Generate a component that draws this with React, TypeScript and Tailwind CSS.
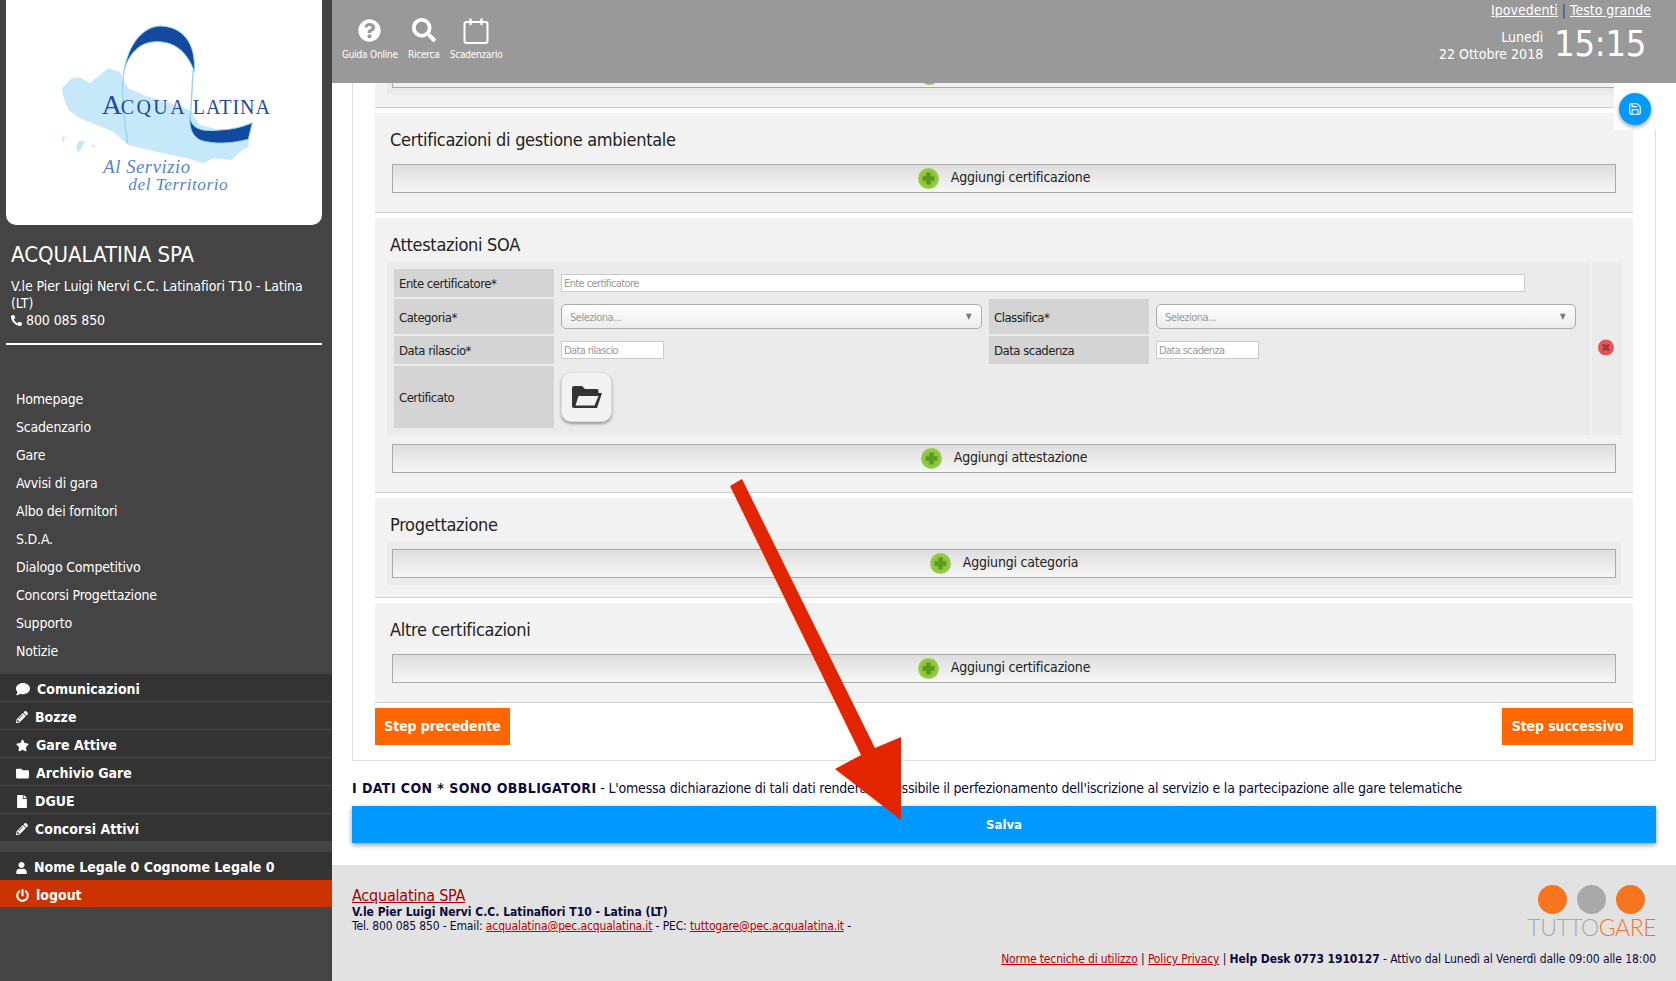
import React from 'react';
import { FaComment, FaPencilAlt, FaStar, FaFolder, FaFile, FaUser, FaPowerOff, FaPhoneAlt, FaQuestionCircle, FaSearch } from 'react-icons/fa';
import { Save } from 'lucide-react';

const NAV = ['Homepage', 'Scadenzario', 'Gare', 'Avvisi di gara', 'Albo dei fornitori', 'S.D.A.', 'Dialogo Competitivo', 'Concorsi Progettazione', 'Supporto', 'Notizie'];

const DARK_NAV = [
  { icon: <FaComment className="w-[14px] h-[14px]" />, label: 'Comunicazioni' },
  { icon: <FaPencilAlt className="w-[12px] h-[12px]" />, label: 'Bozze' },
  { icon: <FaStar className="w-[13px] h-[13px]" />, label: 'Gare Attive' },
  { icon: <FaFolder className="w-[13px] h-[13px]" />, label: 'Archivio Gare' },
  { icon: <FaFile className="w-[12px] h-[13px]" />, label: 'DGUE' },
  { icon: <FaPencilAlt className="w-[12px] h-[12px]" />, label: 'Concorsi Attivi' },
];

const Logo = () => (
  <svg viewBox="18 0 948 675" className="w-full h-full">
    <path d="M185 265 L215 235 L240 232 L270 250 L300 225 L325 205 L360 215 L368 235 L385 265 L430 285 L480 300 L570 330 L600 375 L680 395 L750 370 L745 440 L720 455 L695 480 L640 475 L610 490 L560 475 L470 455 L385 435 L340 395 L290 375 L240 355 L205 330 L190 290 Z" fill="#c6e8f9" />
    <path d="M185 408 L195 412 L190 430 Z M228 440 L240 420 L255 425 L235 460 Z M275 435 L287 438 L278 444 Z" fill="#c6e8f9" />
    <path d="M372 215 C360 280 375 370 383 430" fill="none" stroke="#8fd6f5" strokeWidth="4" />
    <path d="M580 210 C575 260 575 320 570 360" fill="none" stroke="#8fd6f5" strokeWidth="4" />
    <path d="M372 215 C385 130 430 80 480 78 C550 80 588 130 583 215 C560 150 520 125 470 125 C420 125 385 160 372 215Z" fill="#134a9e" stroke="#8fd6f5" strokeWidth="3" />
    <path d="M570 350 C575 390 610 395 660 390 C700 388 730 380 757 368 L745 418 C700 430 640 435 600 420 C575 405 568 385 570 350Z" fill="#134a9e" stroke="#8fd6f5" strokeWidth="3" />
    <text x="305" y="342" fontFamily="'Liberation Serif', serif" fontSize="84" fill="#1e4b9e">A</text>
    <text x="362" y="342" fontFamily="'Liberation Serif', serif" fontSize="60" fill="#1e4b9e" textLength="192">CQUA</text>
    <text x="578" y="342" fontFamily="'Liberation Serif', serif" fontSize="60" fill="#1e4b9e" textLength="232">LATINA</text>
    <text x="310" y="520" fontFamily="'Liberation Serif', serif" fontStyle="italic" fontSize="56" fill="#5585c4" textLength="260">Al Servizio</text>
    <text x="385" y="570" fontFamily="'Liberation Serif', serif" fontStyle="italic" fontSize="52" fill="#5585c4" textLength="298">del Territorio</text>
  </svg>
);

const Sidebar = () => (
  <aside className="w-[332px] shrink-0 bg-[#444444] text-white flex flex-col">
    <div className="ml-[6px] mr-[10px] h-[225px] bg-white rounded-b-[10px] overflow-hidden">
      <Logo />
    </div>
    <h2 className="mt-[16px] pl-[11px] text-[22px] leading-[28px]">ACQUALATINA SPA</h2>
    <p className="mt-[9px] pl-[11px] text-[14px] leading-[17px] tracking-[-0.1px]">
      V.le Pier Luigi Nervi C.C. Latinafiori T10 - Latina<br />
      (LT)<br />
      <FaPhoneAlt className="inline w-[11px] h-[11px] mr-[4px] mb-[2px]" />800 085 850
    </p>
    <div className="mt-[14px] ml-[6px] mr-[10px] h-[2px] bg-white" />
    <nav className="mt-[40px]">
      {NAV.map(n => (
        <div key={n} className="h-[28px] leading-[28px] pl-[16px] text-[14px] tracking-[-0.2px]">{n}</div>
      ))}
    </nav>
    <div className="mt-[9px] bg-[#333333]">
      {DARK_NAV.map(d => (
        <div key={d.label} className="h-[28px] border-b border-[#484848] flex items-center gap-[7px] pl-[16px] pt-[3px] text-[14px] font-bold">
          {d.icon}<span>{d.label}</span>
        </div>
      ))}
    </div>
    <div className="mt-[10px] h-[28px] bg-[#333333] flex items-center gap-[7px] pl-[16px] pt-[3px] text-[14px] font-bold">
      <FaUser className="w-[11px] h-[12px]" /><span>Nome Legale 0 Cognome Legale 0</span>
    </div>
    <div className="h-[27px] bg-[#cc3300] flex items-center gap-[7px] pl-[16px] pt-[3px] text-[14px] font-bold">
      <FaPowerOff className="w-[13px] h-[13px]" /><span>logout</span>
    </div>
  </aside>
);

const CalendarIcon = () => (
  <svg viewBox="0 0 26 27" className="w-[26px] h-[27px]" fill="none" stroke="#fff" strokeWidth="2">
    <rect x="1.5" y="5" width="23" height="21" rx="2" />
    <path d="M7.5 7V2.5M18.5 7V2.5" strokeWidth="2.4" strokeLinecap="round" />
  </svg>
);

const HeaderTool = ({ icon, label }: { icon: React.ReactNode; label: string }) => (
  <div className="flex flex-col items-center">
    <div className="h-[30px] flex items-center justify-center">{icon}</div>
    <span className="mt-[4px] text-[10px] leading-[12px] tracking-[-0.2px]">{label}</span>
  </div>
);

const Header = () => (
  <header className="h-[83px] shrink-0 bg-[#999999] text-white flex justify-between relative z-10">
    <div className="flex gap-[10px] pl-[10px] pt-[15px]">
      <HeaderTool icon={<FaQuestionCircle className="w-[23px] h-[23px]" />} label="Guida Online" />
      <HeaderTool icon={<FaSearch className="w-[24px] h-[24px]" />} label="Ricerca" />
      <HeaderTool icon={<CalendarIcon />} label="Scadenzario" />
    </div>
    <div className="flex flex-col items-end pr-[25px]">
      <div className="text-[14px] leading-[20px]">
        <span className="underline">Ipovedenti</span> <span className="text-[#3a3a66]">|</span> <span className="underline">Testo grande</span>
      </div>
      <div className="flex items-center mt-[2px]">
        <div className="text-right text-[14px] leading-[17px] mt-[3px]">Lunedì<br />22 Ottobre 2018</div>
        <div className="ml-[11px] mr-[5px] text-[36px] leading-[44px] tracking-[-0.3px]">15:15</div>
      </div>
    </div>
  </header>
);

const PlusIcon = () => (
  <svg viewBox="0 0 21 21" className="w-[21px] h-[21px]">
    <defs>
      <radialGradient id="gp" cx="50%" cy="50%" r="60%"><stop offset="0%" stopColor="#7cb52e" /><stop offset="100%" stopColor="#a2d24c" /></radialGradient>
    </defs>
    <circle cx="10.5" cy="10.5" r="10.5" fill="url(#gp)" />
    <path d="M8.3 4.5h4.4v3.8h3.8v4.4h-3.8v3.8H8.3v-3.8H4.5V8.3h3.8z" fill="#5a9a1e" />
  </svg>
);

const RemoveIcon = () => (
  <svg viewBox="0 0 16 16" className="w-[16px] h-[17px]">
    <circle cx="8" cy="8" r="8" fill="#e0575b" />
    <path d="M5 5l6 6M11 5l-6 6" stroke="#a93338" strokeWidth="2.6" />
  </svg>
);

const AddButton = ({ label }: { label: string }) => (
  <div className="h-[29px] border border-[#aaaaaa] bg-gradient-to-b from-[#dedede] to-[#f6f6f6] flex items-center justify-center gap-[12px] text-[14px] tracking-[-0.2px] text-[#222]">
    <PlusIcon /><span className="mb-[3px]">{label}</span>
  </div>
);

const Section = ({ title, children, pb = 'pb-[19px]' }: { title: string; children: React.ReactNode; pb?: string }) => (
  <section className={`bg-[#f2f2f2] border-b border-[#cccccc] px-[17px] pt-[15px] ${pb}`}>
    <h3 className="-ml-[2px] text-[18px] leading-[24px] tracking-[-0.3px] text-[#222]">{title}</h3>
    {children}
  </section>
);

const Label = ({ children, pt = 'pt-[1px]' }: { children: React.ReactNode; pt?: string }) => (
  <div className={`w-[160px] shrink-0 bg-[#d4d4d4] pl-[5px] flex items-center text-[13px] tracking-[-0.5px] text-[#222] ${pt}`}>{children}</div>
);

const TextInput = ({ placeholder, className }: { placeholder: string; className: string }) => (
  <input readOnly placeholder={placeholder} className={`h-[18px] bg-white border border-[#cccccc] px-[2px] text-[11px] tracking-[-0.6px] placeholder:text-[#999] ${className}`} />
);

const SelectBox = ({ className }: { className: string }) => (
  <div className={`h-[25px] rounded-[5px] border border-[#aaaaaa] bg-gradient-to-b from-white to-[#ececec] flex items-center justify-between pl-[8px] pr-[10px] pt-[3px] text-[11px] tracking-[-0.5px] text-[#999] ${className}`}>
    <span>Seleziona...</span><span className="text-[8px] text-[#777] mb-[3px]">▼</span>
  </div>
);

const FolderIcon = () => (
  <svg viewBox="0 0 30 24" className="w-[30px] h-[24px]">
    <path d="M2 1H10L13 4H25a1.5 1.5 0 0 1 1.5 1.5V8H30L25 23H2a2 2 0 0 1-2-2V3a2 2 0 0 1 2-2Z" fill="#333333" />
    <path d="M6.5 11H26.5L22.5 20.5H3.5Z" fill="#f2f2f2" />
  </svg>
);

const Attestazione = () => (
  <div className="mt-[5px] -ml-[5px] -mr-[6px] flex gap-[2px]">
    <div className="flex-1 bg-[#ebebeb] pl-[7px] pt-[7px] pb-[7px] flex flex-col gap-[2px]">
      <div className="h-[28px] flex gap-[7px] items-stretch">
        <Label>Ente certificatore*</Label>
        <TextInput placeholder="Ente certificatore" className="w-[964px] self-center" />
      </div>
      <div className="h-[35px] flex gap-[7px]">
        <Label pt="pt-[2px]">Categoria*</Label>
        <SelectBox className="w-[421px] self-center" />
        <Label pt="pt-[2px]">Classifica*</Label>
        <SelectBox className="w-[420px] self-center" />
      </div>
      <div className="h-[28px] flex gap-[7px]">
        <Label>Data rilascio*</Label>
        <div className="w-[421px] flex items-center"><TextInput placeholder="Data rilascio" className="w-[103px]" /></div>
        <Label>Data scadenza</Label>
        <TextInput placeholder="Data scadenza" className="w-[103px] self-center" />
      </div>
      <div className="h-[62px] flex gap-[7px]">
        <Label>Certificato</Label>
        <div className="self-center w-[51px] h-[50px] rounded-[10px] bg-[#f2f2f2] border border-[#ddd] shadow-[0_2px_3px_rgba(0,0,0,0.35)] flex items-center justify-center">
          <FolderIcon />
        </div>
      </div>
    </div>
    <div className="w-[30px] bg-[#ebebeb] flex items-center justify-center pr-[2px] pb-[3px]"><RemoveIcon /></div>
  </div>
);

const MainPanel = () => (
  <div className="mx-[20px] border border-t-0 border-[#dddddd] h-[678px] px-[22px]">
    {/* the section above is scrolled away under the header */}
    <div className="bg-[#f2f2f2] border-b border-[#cccccc] h-[25px] px-[17px]">
      <div className="-ml-[5px] -mr-[6px] h-[12px] bg-[#ebebeb]">
        <div className="relative ml-[5px] mr-[6px] h-[5px] border border-t-0 border-[#aaaaaa] bg-[#f0f0f0]">
          <div className="absolute left-[526px] bottom-[2px]"><PlusIcon /></div>
        </div>
      </div>
    </div>
    <div className="mt-[5px]">
      <Section title="Certificazioni di gestione ambientale">
        <div className="mt-[12px]"><AddButton label="Aggiungi certificazione" /></div>
      </Section>
    </div>
    <div className="mt-[5px]">
      <Section title="Attestazioni SOA">
        <Attestazione />
        <div className="mt-[9px]"><AddButton label="Aggiungi attestazione" /></div>
      </Section>
    </div>
    <div className="mt-[5px]">
      <Section title="Progettazione" pb="pb-[12px]">
        <div className="mt-[5px] -mx-[5px] px-[5px] py-[7px] bg-[#ebebeb]"><AddButton label="Aggiungi categoria" /></div>
      </Section>
    </div>
    <div className="mt-[5px]">
      <Section title="Altre certificazioni">
        <div className="mt-[12px]"><AddButton label="Aggiungi certificazione" /></div>
      </Section>
    </div>
    <div className="mt-[5px] flex justify-between">
      <div className="w-[135px] h-[37px] bg-[#ff6600] text-white font-bold text-[14px] tracking-[-0.1px] flex items-center justify-center">Step precedente</div>
      <div className="w-[131px] h-[37px] bg-[#ff6600] text-white font-bold text-[14px] tracking-[-0.1px] flex items-center justify-center">Step successivo</div>
    </div>
  </div>
);

const Footer = () => (
  <footer className="h-[116px] shrink-0 bg-[#e2e2e2] pl-[20px] pr-[20px] pt-[21px] flex justify-between relative text-[#0a0a3c]">
    <div>
      <div className="text-[16px] leading-[19px] tracking-[-0.2px] text-[#aa0000] underline">Acqualatina SPA</div>
      <div className="text-[12px] leading-[14px] font-bold">V.le Pier Luigi Nervi C.C. Latinafiori T10 - Latina (LT)</div>
      <div className="text-[12px] leading-[14px] tracking-[-0.14px]">
        Tel. 800 085 850 - Email: <span className="text-[#c00000] underline">acqualatina@pec.acqualatina.it</span> - PEC: <span className="text-[#c00000] underline">tuttogare@pec.acqualatina.it</span> -
      </div>
    </div>
    <div className="flex flex-col items-end">
      <div className="flex gap-[10px] pr-[11px] -mt-[1px]">
        <div className="w-[29px] h-[29px] rounded-full bg-[#f5761f]" />
        <div className="w-[29px] h-[29px] rounded-full bg-[#a9a9a9]" />
        <div className="w-[29px] h-[29px] rounded-full bg-[#f5761f]" />
      </div>
      <div className="mt-[1px] text-[23px] leading-[24px] font-['Lato',sans-serif] font-light tracking-[-0.5px]">
        <span className="text-[#a9a9a9]">TUTTO</span><span className="text-[#f5761f]">GARE</span>
      </div>
      <div className="mt-[13px] text-[12px] leading-[14px] whitespace-nowrap tracking-[-0.07px]">
        <span className="text-[#c00000] underline tracking-[-0.15px]">Norme tecniche di utilizzo</span> | <span className="text-[#c00000] underline tracking-[-0.15px]">Policy Privacy</span> | <b>Help Desk 0773 1910127</b> - Attivo dal Lunedì al Venerdì dalle 09:00 alle 18:00
      </div>
    </div>
  </footer>
);

const App: React.FC = () => {
  return (
    <div className="relative flex h-[981px] w-[1676px] overflow-hidden bg-white font-['DejaVu_Sans_Condensed','DejaVu_Sans',sans-serif]">
      <Sidebar />
      <div className="flex-1 flex flex-col min-w-0">
        <Header />
        <main className="flex-1 relative overflow-hidden">
          <MainPanel />
          <p className="mt-[18px] px-[20px] text-[14px] leading-[18px] tracking-[-0.21px] text-[#0a0a3c]">
            <b className="tracking-[0.42px]">I DATI CON * SONO OBBLIGATORI</b> - L'omessa dichiarazione di tali dati renderà impossibile il perfezionamento dell'iscrizione al servizio e la partecipazione alle gare telematiche
          </p>
          <div className="mt-[9px] mx-[20px] h-[37px] bg-[#0099ff] shadow-[0_2px_5px_rgba(0,0,0,0.4)] text-white font-bold text-[13px] flex items-center justify-center">Salva</div>
          <div className="absolute right-[20px] top-0 w-[42px] h-[47px] bg-white flex items-center justify-center pt-[5px]">
            <div className="w-[32px] h-[32px] rounded-full bg-[#0099ff] shadow-[0_2px_4px_rgba(0,0,0,0.4)] flex items-center justify-center text-white">
              <Save className="w-[14px] h-[14px]" strokeWidth={2} />
            </div>
          </div>
        </main>
        <Footer />
      </div>
      <svg className="absolute left-0 top-0 pointer-events-none" width="1676" height="981" viewBox="0 0 1676 981">
        <polygon points="730,486 742,479 875,748 901,737 901,820 835,769 861,755" fill="#e32400" />
      </svg>
    </div>
  );
};

export default App;
